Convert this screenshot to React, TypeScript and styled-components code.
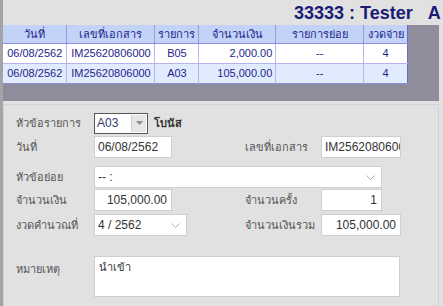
import React from 'react'
import styled, { createGlobalStyle } from 'styled-components'

const GlobalStyle = createGlobalStyle`
  body {
    margin: 0;
    font-family: Tahoma, "Liberation Sans", "Noto Sans", sans-serif;
  }
`

const Page = styled.div`
  width: 443px;
  height: 306px;
  box-sizing: border-box;
  border-left: 3px solid #a4a4a4;
  background: #e1e1e1;
  display: flex;
  flex-direction: column;
  overflow: hidden;
`

const TitleBar = styled.div`
  height: 25px;
  flex-shrink: 0;
  padding-left: 291px;
  font-size: 18px;
  font-weight: bold;
  color: #1c1c78;
  line-height: 27px;
  white-space: nowrap;
  overflow: hidden;
`

const GridArea = styled.div`
  margin-right: 4px;
  background: #8f8d9b;
  padding-bottom: 17px;
  flex-shrink: 0;
`

const Table = styled.table`
  width: 405px;
  border-collapse: collapse;
  font-size: 11px;
  line-height: 13px;
  color: #1e1e8c;
  border-right: 1px solid #6a6ad2;
  border-bottom: 1px solid #8e8ee0;

  th {
    height: 18px;
    background: #c3d3f8;
    font-weight: normal;
    border-left: 1px solid #9a9ad6;
    border-bottom: 1px solid #8e8ee0;
    padding: 0;
  }

  td {
    height: 19px;
    border-left: 1px solid #b4b4ee;
    border-top: 1px solid #b4b4ee;
    padding: 0 3px;
    text-align: center;
    white-space: nowrap;
  }

  th:first-child,
  td:first-child {
    border-left: none;
  }
`

const DataRow = styled.tr<{ $alt?: boolean }>`
  background: ${p => (p.$alt ? '#e0ecfe' : '#ffffff')};
`

const Money = styled.td`
  && {
    text-align: right;
  }
`

const FormPanel = styled.div`
  flex: 1;
  margin: 3px 4px 0 0;
  border: 1px solid #c9d4dc;
  border-bottom: none;
  padding: 7px 0 0 12px;
`

const Row = styled.div<{ $gap: number; $h?: number }>`
  display: flex;
  align-items: ${p => (p.$h ? 'flex-start' : 'center')};
  height: ${p => p.$h ?? 22}px;
  margin-top: ${p => p.$gap}px;
`

const Label = styled.div<{ $w: number; $top?: boolean }>`
  width: ${p => p.$w}px;
  flex-shrink: 0;
  font-size: 11px;
  line-height: 14px;
  color: #555;
  padding-top: ${p => (p.$top ? '6px' : '0')};
`

const Cell = styled.div<{ $w: number }>`
  width: ${p => p.$w}px;
  flex-shrink: 0;
  display: flex;
  align-items: center;
`

const Input = styled.div<{ $w: number; $right?: boolean }>`
  width: ${p => p.$w}px;
  height: 22px;
  box-sizing: border-box;
  background: #fff;
  border: 1px solid #cfcfcf;
  padding: 0 4px 0 3px;
  font-size: 12px;
  line-height: 20px;
  color: #333;
  text-align: ${p => (p.$right ? 'right' : 'left')};
  white-space: nowrap;
  overflow: hidden;
`

const Select = styled(Input)`
  display: flex;
  align-items: center;
  justify-content: space-between;
  padding-right: 6px;
`

const Combo = styled.div`
  width: 54px;
  height: 21px;
  box-sizing: border-box;
  border: 1px solid #575757;
  background: #fff;
  display: flex;
  align-items: center;
  justify-content: space-between;
  padding-left: 2px;
  font-size: 12px;
  color: #2e3a6a;
`

const ComboButton = styled.div`
  width: 14px;
  height: 17px;
  margin-right: 1px;
  background: #e6e6e6;
  border-left: 1px solid #cfcfcf;
  display: flex;
  align-items: center;
  justify-content: center;
`

const Caption = styled.span`
  margin-left: 6px;
  font-size: 11px;
  font-weight: bold;
  color: #333;
`

const TextArea = styled.div`
  width: 306px;
  height: 41px;
  box-sizing: border-box;
  background: #fff;
  border: 1px solid #cfcfcf;
  padding: 3px 4px;
  font-size: 11px;
  line-height: 14px;
  color: #333;
`

const Chevron = () => (
  <svg width="9" height="5" viewBox="0 0 9 5">
    <polyline points="0.5,0.5 4.5,4.5 8.5,0.5" fill="none" stroke="#b0b0b0" strokeWidth="1" />
  </svg>
)

const rows = [
  { date: '06/08/2562', doc: 'IM25620806000', code: 'B05', amount: '2,000.00', sub: '--', period: '4' },
  { date: '06/08/2562', doc: 'IM25620806000', code: 'A03', amount: '105,000.00', sub: '--', period: '4' },
]

const App = () => {
  return (
    <Page>
      <GlobalStyle />
      <TitleBar>33333 : Tester&nbsp;&nbsp;&nbsp;A</TitleBar>
      <GridArea>
        <Table>
          <colgroup>
            <col style={{ width: 64 }} />
            <col style={{ width: 88 }} />
            <col style={{ width: 44 }} />
            <col style={{ width: 77 }} />
            <col style={{ width: 88 }} />
            <col style={{ width: 44 }} />
          </colgroup>
          <thead>
            <tr>
              <th>วันที่</th>
              <th>เลขที่เอกสาร</th>
              <th>รายการ</th>
              <th>จำนวนเงิน</th>
              <th>รายการย่อย</th>
              <th>งวดจ่าย</th>
            </tr>
          </thead>
          <tbody>
            {rows.map((r, i) => (
              <DataRow key={i} $alt={i % 2 === 1}>
                <td>{r.date}</td>
                <td>{r.doc}</td>
                <td>{r.code}</td>
                <Money>{r.amount}</Money>
                <td>{r.sub}</td>
                <td>{r.period}</td>
              </DataRow>
            ))}
          </tbody>
        </Table>
      </GridArea>
      <FormPanel>
        <Row $gap={0}>
          <Label $w={78}>หัวข้อรายการ</Label>
          <Cell $w={151}>
            <Combo>
              A03
              <ComboButton>
                <svg width="7" height="4" viewBox="0 0 7 4">
                  <polygon points="0,0 7,0 3.5,4" fill="#8a8a8a" />
                </svg>
              </ComboButton>
            </Combo>
            <Caption>โบนัส</Caption>
          </Cell>
        </Row>
        <Row $gap={2}>
          <Label $w={78}>วันที่</Label>
          <Cell $w={151}>
            <Input $w={78}>06/08/2562</Input>
          </Cell>
          <Label $w={76}>เลขที่เอกสาร</Label>
          <Input $w={80}>IM25620806000</Input>
        </Row>
        <Row $gap={8}>
          <Label $w={78}>หัวข้อย่อย</Label>
          <Select $w={288}>
            -- :
            <Chevron />
          </Select>
        </Row>
        <Row $gap={1}>
          <Label $w={78}>จำนวนเงิน</Label>
          <Cell $w={151}>
            <Input $w={78} $right>105,000.00</Input>
          </Cell>
          <Label $w={76}>จำนวนครั้ง</Label>
          <Input $w={61} $right>1</Input>
        </Row>
        <Row $gap={3}>
          <Label $w={78}>งวดคำนวณที่</Label>
          <Cell $w={151}>
            <Select $w={93}>
              4 / 2562
              <Chevron />
            </Select>
          </Cell>
          <Label $w={76}>จำนวนเงินรวม</Label>
          <Input $w={80} $right>105,000.00</Input>
        </Row>
        <Row $gap={20} $h={41}>
          <Label $w={78} $top>หมายเหตุ</Label>
          <TextArea>นำเข้า</TextArea>
        </Row>
      </FormPanel>
    </Page>
  )
}

export default App
